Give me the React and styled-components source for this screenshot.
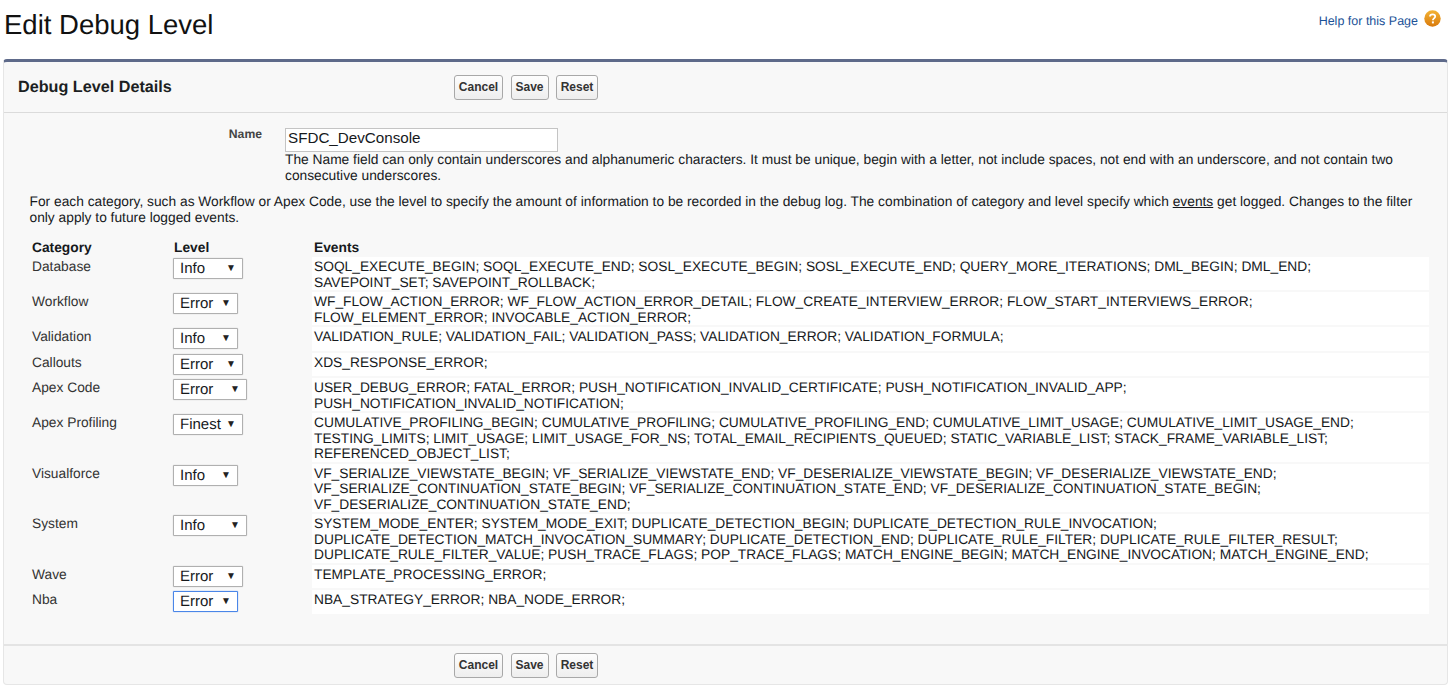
import styled, { createGlobalStyle } from "styled-components";

const GlobalStyle = createGlobalStyle`
	html, body {
		margin: 0;
		background: #ffffff;
	}
	body {
		font-family: "Liberation Sans", Arial, sans-serif;
		color: #16191c;
		text-rendering: geometricPrecision;
	}
`;

const Page = styled.div`
	width: 1456px;
	height: 697px;
	overflow: hidden;
`;

const TitleBar = styled.div`
	display: flex;
	justify-content: space-between;
	height: 59px;
	padding: 0 15px 0 4px;
	box-sizing: border-box;
`;

const Title = styled.h1`
	margin: 9px 0 0;
	font-size: 27.5px;
	line-height: 32px;
	font-weight: 400;
	color: #111111;
`;

const HelpLink = styled.a`
	display: flex;
	gap: 6px;
	height: 18px;
	margin-top: 10px;
	font-size: 12.5px;
	color: #1b5297;
`;

const HelpLabel = styled.span`
	margin-top: 4px;
`;

const Panel = styled.div`
	margin: 0 8px 0 3px;
	height: 626px;
	box-sizing: border-box;
	background: #f8f8f8;
	border: 1px solid #e6e6e6;
	border-top: 3px solid #5e6a8a;
	border-radius: 4px;
	display: flex;
	flex-direction: column;
`;

const PanelHeader = styled.div`
	display: flex;
	align-items: center;
	height: 50px;
	padding-left: 14px;
	border-bottom: 1px solid #dbdbdb;
	flex-shrink: 0;
`;

const PanelTitle = styled.div`
	width: 436px;
	font-size: 16.2px;
	font-weight: 700;
	color: #1c1f22;
`;

const ButtonGroup = styled.div`
	display: flex;
	gap: 7.5px;
`;

const Button = styled.button`
	width: ${(p) => p.$width}px;
	height: 25px;
	padding: 0;
	font-family: inherit;
	font-size: 12px;
	font-weight: 700;
	color: #333333;
	background: linear-gradient(#fdfdfd, #eeeeee);
	border: 1px solid #a8a8a8;
	border-radius: 3px;
`;

const Body = styled.div`
	flex: 1;
	padding-top: 14px;
`;

const NameRow = styled.div`
	display: flex;
`;

const NameLabel = styled.label`
	width: 258px;
	text-align: right;
	font-size: 12.2px;
	font-weight: 700;
	color: #444444;
`;

const NameField = styled.div`
	margin: 1px 0 0 23px;
	width: 1115px;
`;

const NameInput = styled.input`
	display: block;
	width: 273px;
	height: 24px;
	padding: 0 2px 5px;
	box-sizing: border-box;
	font-family: inherit;
	font-size: 15.2px;
	color: #16191c;
	background: #ffffff;
	border: 1px solid #c4c4c4;
`;

const HelpText = styled.div`
	font-size: 13.78px;
	line-height: 15.5px;
`;

const Intro = styled.div`
	margin: 11px 0 0 25.5px;
	width: 1400px;
	font-size: 13.78px;
	line-height: 15.5px;
`;

const Underlined = styled.span`
	text-decoration: underline;
`;

const Table = styled.div`
	margin: 14px 0 0 28px;
`;

const HeadRow = styled.div`
	display: grid;
	grid-template-columns: 142px 140px 1fr;
	height: 18px;
	font-size: 13.78px;
	font-weight: 700;
	line-height: 17px;
`;

const Row = styled.div`
	display: grid;
	grid-template-columns: 141px 139px 1117px;
	min-height: 25.5px;
	box-sizing: border-box;
	border-bottom: 2px solid #f8f8f8;
`;

const Category = styled.div`
	font-size: 13.78px;
	line-height: 15.5px;
	color: #333333;
	padding-top: 2px;
`;

const LevelCell = styled.div`
	padding-top: 1px;
`;

const SelectBox = styled.div`
	display: flex;
	align-items: center;
	justify-content: space-between;
	width: ${(p) => p.$width}px;
	height: 21px;
	box-sizing: border-box;
	padding: 0 6px;
	font-size: 15px;
	background: #ffffff;
	border: 1px solid ${(p) => (p.$focused ? "#4a86e8" : "#b0b0b0")};
	box-shadow: 0 0 1px ${(p) => (p.$focused ? "#4a86e8" : "#b0b0b0")};
	border-radius: 1px;
	color: #16191c;
`;

const Arrow = styled.span`
	font-size: 10px;
	color: #222222;
`;

const Events = styled.div`
	background: #ffffff;
	padding: 2px 0 0 2px;
	font-size: 13.78px;
	line-height: 15.5px;
	color: #16191c;
`;

const EventLine = styled.div`
	white-space: nowrap;
`;

const PanelFooter = styled.div`
	display: flex;
	align-items: center;
	box-sizing: border-box;
	height: 40px;
	padding-left: 450px;
	border-top: 2px solid #e4e4e4;
	flex-shrink: 0;
`;

const HelpIcon = () => (
	<svg width="17" height="17" viewBox="0 0 17 17">
		<defs>
			<linearGradient id="helpOrange" x1="0" y1="0" x2="0" y2="1">
				<stop offset="0" stopColor="#f3b335" />
				<stop offset="1" stopColor="#d97a0c" />
			</linearGradient>
		</defs>
		<circle cx="8.5" cy="8.5" r="8.2" fill="url(#helpOrange)" />
		<path
			d="M6 6.6c0-1.5 1.1-2.3 2.6-2.3s2.6.9 2.6 2.2c0 1.9-2.3 1.9-2.3 3.7"
			fill="none"
			stroke="#ffffff"
			strokeWidth="1.8"
		/>
		<rect x="7.9" y="11.4" width="2" height="2" fill="#ffffff" />
	</svg>
);

const rows = [
	{
		name: "Database",
		level: "Info",
		width: 70,
		lines: [
			"SOQL_EXECUTE_BEGIN; SOQL_EXECUTE_END; SOSL_EXECUTE_BEGIN; SOSL_EXECUTE_END; QUERY_MORE_ITERATIONS; DML_BEGIN; DML_END;",
			"SAVEPOINT_SET; SAVEPOINT_ROLLBACK;",
		],
	},
	{
		name: "Workflow",
		level: "Error",
		width: 65,
		lines: [
			"WF_FLOW_ACTION_ERROR; WF_FLOW_ACTION_ERROR_DETAIL; FLOW_CREATE_INTERVIEW_ERROR; FLOW_START_INTERVIEWS_ERROR;",
			"FLOW_ELEMENT_ERROR; INVOCABLE_ACTION_ERROR;",
		],
	},
	{
		name: "Validation",
		level: "Info",
		width: 65,
		lines: ["VALIDATION_RULE; VALIDATION_FAIL; VALIDATION_PASS; VALIDATION_ERROR; VALIDATION_FORMULA;"],
	},
	{ name: "Callouts", level: "Error", width: 70, lines: ["XDS_RESPONSE_ERROR;"] },
	{
		name: "Apex Code",
		level: "Error",
		width: 74,
		lines: [
			"USER_DEBUG_ERROR; FATAL_ERROR; PUSH_NOTIFICATION_INVALID_CERTIFICATE; PUSH_NOTIFICATION_INVALID_APP;",
			"PUSH_NOTIFICATION_INVALID_NOTIFICATION;",
		],
	},
	{
		name: "Apex Profiling",
		level: "Finest",
		width: 70,
		lines: [
			"CUMULATIVE_PROFILING_BEGIN; CUMULATIVE_PROFILING; CUMULATIVE_PROFILING_END; CUMULATIVE_LIMIT_USAGE; CUMULATIVE_LIMIT_USAGE_END;",
			"TESTING_LIMITS; LIMIT_USAGE; LIMIT_USAGE_FOR_NS; TOTAL_EMAIL_RECIPIENTS_QUEUED; STATIC_VARIABLE_LIST; STACK_FRAME_VARIABLE_LIST;",
			"REFERENCED_OBJECT_LIST;",
		],
	},
	{
		name: "Visualforce",
		level: "Info",
		width: 65,
		lines: [
			"VF_SERIALIZE_VIEWSTATE_BEGIN; VF_SERIALIZE_VIEWSTATE_END; VF_DESERIALIZE_VIEWSTATE_BEGIN; VF_DESERIALIZE_VIEWSTATE_END;",
			"VF_SERIALIZE_CONTINUATION_STATE_BEGIN; VF_SERIALIZE_CONTINUATION_STATE_END; VF_DESERIALIZE_CONTINUATION_STATE_BEGIN;",
			"VF_DESERIALIZE_CONTINUATION_STATE_END;",
		],
	},
	{
		name: "System",
		level: "Info",
		width: 74,
		lines: [
			"SYSTEM_MODE_ENTER; SYSTEM_MODE_EXIT; DUPLICATE_DETECTION_BEGIN; DUPLICATE_DETECTION_RULE_INVOCATION;",
			"DUPLICATE_DETECTION_MATCH_INVOCATION_SUMMARY; DUPLICATE_DETECTION_END; DUPLICATE_RULE_FILTER; DUPLICATE_RULE_FILTER_RESULT;",
			"DUPLICATE_RULE_FILTER_VALUE; PUSH_TRACE_FLAGS; POP_TRACE_FLAGS; MATCH_ENGINE_BEGIN; MATCH_ENGINE_INVOCATION; MATCH_ENGINE_END;",
		],
	},
	{ name: "Wave", level: "Error", width: 70, lines: ["TEMPLATE_PROCESSING_ERROR;"] },
	{
		name: "Nba",
		level: "Error",
		width: 65,
		focused: true,
		lines: ["NBA_STRATEGY_ERROR; NBA_NODE_ERROR;"],
	},
];

const Actions = () => (
	<ButtonGroup>
		<Button $width={49}>Cancel</Button>
		<Button $width={38}>Save</Button>
		<Button $width={42}>Reset</Button>
	</ButtonGroup>
);

const App = () => {
	return (
		<Page>
			<GlobalStyle />
			<TitleBar>
				<Title>Edit Debug Level</Title>
				<HelpLink>
					<HelpLabel>Help for this Page</HelpLabel>
					<HelpIcon />
				</HelpLink>
			</TitleBar>
			<Panel>
				<PanelHeader>
					<PanelTitle>Debug Level Details</PanelTitle>
					<Actions />
				</PanelHeader>
				<Body>
					<NameRow>
						<NameLabel>Name</NameLabel>
						<NameField>
							<NameInput defaultValue="SFDC_DevConsole" />
							<HelpText>
								The Name field can only contain underscores and alphanumeric characters. It must be
								unique, begin with a letter, not include spaces, not end with an underscore, and not
								contain two consecutive underscores.
							</HelpText>
						</NameField>
					</NameRow>
					<Intro>
						For each category, such as Workflow or Apex Code, use the level to specify the amount of
						information to be recorded in the debug log. The combination of category and level specify
						which <Underlined>events</Underlined> get logged. Changes to the filter only apply to future
						logged events.
					</Intro>
					<Table>
						<HeadRow>
							<div>Category</div>
							<div>Level</div>
							<div>Events</div>
						</HeadRow>
						{rows.map((row) => (
							<Row key={row.name}>
								<Category>{row.name}</Category>
								<LevelCell>
									<SelectBox $width={row.width} $focused={row.focused}>
										{row.level}
										<Arrow>▼</Arrow>
									</SelectBox>
								</LevelCell>
								<Events>
									{row.lines.map((line) => (
										<EventLine key={line}>{line}</EventLine>
									))}
								</Events>
							</Row>
						))}
					</Table>
				</Body>
				<PanelFooter>
					<Actions />
				</PanelFooter>
			</Panel>
		</Page>
	);
};

export default App;
